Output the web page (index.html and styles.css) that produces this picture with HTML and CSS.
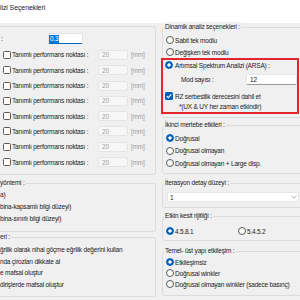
FILE: index.html
```html
<!DOCTYPE html>
<html lang="tr">
<head>
    <meta charset="UTF-8">
    <title>Analizi Seçenekleri</title>
    <link rel="stylesheet" href="styles.css">
</head>
<body>
    <div class="titlebar"><span class="title">lizi Seçenekleri</span></div>
    <div class="content">
        <div class="col col-left">
            <div class="group group-perf">
                <div class="first-row">
                    <span class="colon">:</span>
                    <span class="textbox focused"><span class="sel">0.3</span></span>
                </div>
                <div class="perf-list">
                    <div class="perf-row"><span class="check"></span><span class="perf-label">Tanımlı performans noktası :</span><span class="textbox disabled">20</span><span class="unit">[mm]</span></div>
                    <div class="perf-row"><span class="check"></span><span class="perf-label">Tanımlı performans noktası :</span><span class="textbox disabled">20</span><span class="unit">[mm]</span></div>
                    <div class="perf-row"><span class="check"></span><span class="perf-label">Tanımlı performans noktası :</span><span class="textbox disabled">20</span><span class="unit">[mm]</span></div>
                    <div class="perf-row"><span class="check"></span><span class="perf-label">Tanımlı performans noktası :</span><span class="textbox disabled">20</span><span class="unit">[mm]</span></div>
                    <div class="perf-row"><span class="check"></span><span class="perf-label">Tanımlı performans noktası :</span><span class="textbox disabled">20</span><span class="unit">[mm]</span></div>
                    <div class="perf-row"><span class="check"></span><span class="perf-label">Tanımlı performans noktası :</span><span class="textbox disabled">20</span><span class="unit">[mm]</span></div>
                    <div class="perf-row"><span class="check"></span><span class="perf-label">Tanımlı performans noktası :</span><span class="textbox disabled">20</span><span class="unit">[mm]</span></div>
                    <div class="perf-row"><span class="check"></span><span class="perf-label">Tanımlı performans noktası :</span><span class="textbox disabled">20</span><span class="unit">[mm]</span></div>
                </div>
            </div>

            <div class="group group-method">
                <div class="group-title">yöntemi :</div>
                <div class="text-list">
                    <div class="text-row">a)</div>
                    <div class="text-row">bina-kapsamlı bilgi düzeyi)</div>
                    <div class="text-row">bina-sınırlı bilgi düzeyi)</div>
                </div>
            </div>

            <div class="group group-hinge">
                <div class="group-title">eri :</div>
                <div class="text-list">
                    <div class="text-row">ğrilik olarak nihai göçme eğrilik değerini kullan</div>
                    <div class="text-row">nda çirozları dikkate al</div>
                    <div class="text-row">e mafsal oluştur</div>
                    <div class="text-row">dirişlerde mafsal oluştur</div>
                </div>
            </div>
        </div>

        <div class="col col-right">
            <div class="group group-dynamic">
                <div class="group-title">Dinamik analiz seçenekleri :</div>
                <div class="opt-list">
                    <div class="opt"><span class="radio"></span>Sabit tek modlu</div>
                    <div class="opt"><span class="radio"></span>Değişken tek modlu</div>
                </div>
                <div class="highlight">
                    <div class="hl-row"><span class="radio on"></span>Artımsal Spektrum Analizi (ARSA) :</div>
                    <div class="mod-row">
                        <span class="mod-label">Mod sayısı :</span>
                        <span class="textbox mod-input">12</span>
                    </div>
                    <div class="hl-row rz-row">
                        <span class="check on">
                            <svg viewBox="0 0 8 8" width="8" height="8"><polyline points="1.7,4.1 3.3,5.7 6.3,2.4" fill="none" stroke="#fff" stroke-width="1.1"/></svg>
                        </span>RZ serbestlik derecesini dahil et
                    </div>
                    <div class="note">*(UX &amp; UY her zaman etkindir)</div>
                </div>
            </div>

            <div class="group group-second">
                <div class="group-title">İkinci mertebe etkileri :</div>
                <div class="opt-list">
                    <div class="opt"><span class="radio on"></span>Doğrusal</div>
                    <div class="opt"><span class="radio"></span>Doğrusal olmayan</div>
                    <div class="opt"><span class="radio"></span>Doğrusal olmayan + Large disp.</div>
                </div>
            </div>

            <div class="group group-iter">
                <div class="group-title">İterasyon detay düzeyi :</div>
                <div class="combo">
                    <span>1</span>
                    <svg viewBox="0 0 6 4" width="6" height="4"><polyline points="0.5,0.8 3,3.2 5.5,0.8" fill="none" stroke="#9a9a9a" stroke-width="0.8"/></svg>
                </div>
            </div>

            <div class="group group-stiff">
                <div class="group-title">Etkin kesit rijitliği :</div>
                <div class="opt-inline">
                    <div class="opt opt-fixed"><span class="radio on"></span>4.5.8.1</div>
                    <div class="opt"><span class="radio"></span>5.4.5.2</div>
                </div>
            </div>

            <div class="group group-soil">
                <div class="group-title">Temel- üst yapı etkileşim :</div>
                <div class="opt-list">
                    <div class="opt"><span class="radio on"></span>Etkileşimsiz</div>
                    <div class="opt"><span class="radio"></span>Doğrusal winkler</div>
                    <div class="opt"><span class="radio"></span>Doğrusal olmayan winkler (sadece basınç)</div>
                </div>
            </div>
        </div>
    </div>
</body>
</html>
```

FILE: styles.css
```css
:root {
    --bg: #f0f0f0;
    --border: #dcdcdc;
    --accent: #005fb8;
    --text: #1b1b1b;
    --muted: #a0a0a0;
    --red: #e3262d;
}

* {
    margin: 0;
    padding: 0;
    box-sizing: border-box;
}

body {
    width: 300px;
    height: 300px;
    overflow: hidden;
    background: var(--bg);
    font-family: 'Liberation Sans', Arial, sans-serif;
    font-size: 6.5px;
    letter-spacing: -0.2px;
    color: var(--text);
}

.titlebar {
    height: 23px;
    background: #fff;
    padding-top: 4px;
}

.title {
    display: block;
    font-size: 7px;
    line-height: 8px;
    letter-spacing: -0.1px;
}

.content {
    display: grid;
    grid-template-columns: 156px 144px;
    column-gap: 6px;
}

/* group boxes */
.group {
    border: 1px solid var(--border);
    border-radius: 3px;
}

.col-left .group {
    border-left: none;
    border-radius: 0 3px 3px 0;
}

.group-title {
    width: fit-content;
    line-height: 9px;
    margin-top: -6px;
    padding: 0 1px;
    background: var(--bg);
}

.col-right .group-title {
    margin-left: 1px;
}

.col-left .group-title {
    padding-left: 0;
}

/* left column */
.group-perf {
    margin-top: 3px;
    padding: 6px 0 4.25px 0;
}

.first-row {
    display: flex;
    align-items: center;
    height: 11px;
    padding-left: 1px;
}

.colon {
    width: 47px;
}

.textbox {
    display: flex;
    align-items: center;
    background: #fff;
    border: 1px solid #e3e3e3;
    border-radius: 2px;
}

.textbox.focused {
    width: 35px;
    height: 11px;
    border-bottom: 1px solid #0067c0;
}

.sel {
    background: #0078d7;
    color: #fff;
    line-height: 8px;
    padding: 0 1px;
}

.perf-list {
    margin-top: 3.35px;
}

.perf-row {
    display: flex;
    align-items: center;
    height: 15.3px;
    padding-left: 3px;
}

.perf-label {
    width: 86px;
    margin-left: 1px;
}

.textbox.disabled {
    width: 30px;
    height: 10px;
    padding-left: 3px;
    background: #f7f7f7;
    border-color: #e4e4e4;
    color: var(--muted);
}

.unit {
    margin-left: 3px;
    color: var(--muted);
}

.group-method {
    margin-top: 8px;
    padding-bottom: 6px;
}

.group-method .text-list {
    margin-top: 2px;
}

.group-method .text-row {
    height: 12px;
    line-height: 12px;
}

.group-hinge {
    margin-top: 5px;
    padding-bottom: 5.5px;
}

.group-hinge .text-list {
    margin-top: 3.15px;
}

.group-hinge .text-row {
    height: 11.7px;
    line-height: 11.7px;
    white-space: nowrap;
}

/* right column */
.opt {
    display: flex;
    align-items: center;
    gap: 1px;
    white-space: nowrap;
}

.opt-list .opt {
    padding-left: 3px;
}

.radio {
    width: 8px;
    height: 8px;
    flex: none;
    border: 1px solid #5a5a5a;
    border-radius: 50%;
    background: #fbfbfb;
}

.radio.on {
    border-color: var(--accent);
    background: radial-gradient(circle, #fff 0 1.4px, var(--accent) 1.9px);
}

.check {
    width: 8px;
    height: 8px;
    flex: none;
    border: 1px solid #5a5a5a;
    border-radius: 1.5px;
    background: #fcfcfc;
}

.check.on {
    border: none;
    background: var(--accent);
}

.check svg {
    display: block;
}

.group-dynamic {
    margin-top: 4px;
    padding-bottom: 3px;
}

.group-dynamic .opt-list {
    margin-top: 3px;
}

.group-dynamic .opt {
    height: 12px;
}

.highlight {
    width: 138px;
    margin-left: -2px;
    border: 2px solid var(--red);
    padding-left: 2px;
}

.hl-row {
    display: flex;
    align-items: center;
    gap: 2px;
    height: 10px;
}

.mod-row {
    display: flex;
    align-items: center;
    height: 11px;
    margin-top: 4px;
    padding-left: 16px;
}

.mod-label {
    width: 65px;
}

.textbox.mod-input {
    flex: 1;
    height: 11px;
    padding-left: 3px;
    border-color: #e6e6e6;
    border-bottom-color: #9a9a9a;
}

.rz-row {
    margin-top: 6px;
}

.note {
    height: 11px;
    line-height: 11px;
    padding-left: 14px;
}

.group-second {
    margin-top: 7px;
    padding-bottom: 3.75px;
}

.group-second .opt-list {
    margin-top: 2.75px;
}

.group-second .opt {
    height: 12.5px;
}

.group-iter {
    margin-top: 9px;
    padding-bottom: 5px;
}

.combo {
    display: flex;
    align-items: center;
    justify-content: space-between;
    width: 132px;
    height: 10px;
    margin: 5px 0 0 4px;
    padding: 0 1px 0 2px;
    background: #fff;
    border: 1px solid #e6e6e6;
    border-radius: 2px;
}

.group-stiff {
    margin-top: 8px;
    padding-bottom: 3px;
}

.opt-inline {
    display: flex;
    height: 12px;
    margin-top: 5px;
    padding-left: 3px;
}

.opt-fixed {
    width: 72px;
}

.group-soil {
    margin-top: 10px;
    padding-bottom: 5.5px;
}

.group-soil .opt-list {
    margin-top: 1.5px;
}

.group-soil .opt {
    height: 11px;
}
```
